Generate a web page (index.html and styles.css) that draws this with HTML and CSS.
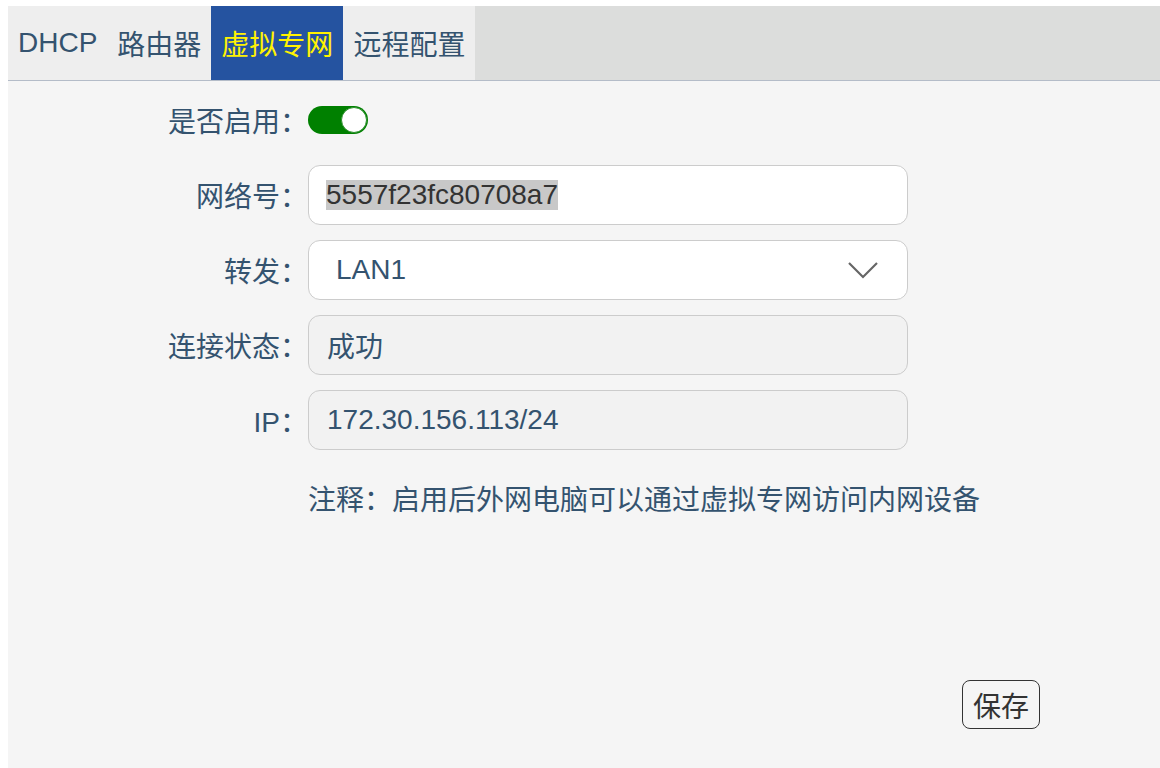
FILE: index.html
```html
<!DOCTYPE html>
<html lang="zh-CN">
<head>
    <meta charset="UTF-8">
    <meta name="viewport" content="width=device-width, initial-scale=1.0">
    <title>虚拟专网</title>
    <link rel="stylesheet" href="styles.css">
</head>
<body>
    <div class="tabs">
        <div class="tab">DHCP</div>
        <div class="tab">路由器</div>
        <div class="tab active">虚拟专网</div>
        <div class="tab">远程配置</div>
    </div>
    <div class="panel">
        <div class="form">
            <div class="row">
                <label class="label">是否启用：</label>
                <div class="switch on"><span class="knob"></span></div>
            </div>
            <div class="row">
                <label class="label">网络号：</label>
                <div class="field"><span class="selected">5557f23fc80708a7</span></div>
            </div>
            <div class="row">
                <label class="label">转发：</label>
                <div class="field select">
                    <span>LAN1</span>
                    <svg class="chevron" width="32" height="18" viewBox="0 0 32 18">
                        <polyline points="2,2 16,16 30,2" fill="none" stroke="#666" stroke-width="2.2"/>
                    </svg>
                </div>
            </div>
            <div class="row">
                <label class="label">连接状态：</label>
                <div class="field readonly">成功</div>
            </div>
            <div class="row">
                <label class="label">IP：</label>
                <div class="field readonly">172.30.156.113/24</div>
            </div>
            <p class="note">注释：启用后外网电脑可以通过虚拟专网访问内网设备</p>
        </div>
        <div class="actions">
            <button class="save">保存</button>
        </div>
    </div>
</body>
</html>
```

FILE: styles.css
```css
body {
    margin: 6px 0 0 8px;
    background-color: #ffffff;
    font-family: "Liberation Sans", "Noto Sans CJK SC", sans-serif;
    font-size: 28px;
    color: #34536f;
}
.tabs {
    display: flex;
    height: 74px;
    background-color: #dcdddc;
    border-bottom: 1px solid #b4bcc8;
}
.tab {
    display: flex;
    align-items: center;
    padding: 0 10px;
    background-color: #eeeeee;
    color: #34536f;
}
.tab.active {
    background-color: #2553a0;
    color: #fff200;
}
.panel {
    background-color: #f5f5f5;
    min-height: calc(100vh - 81px);
    padding-top: 9px;
}
.form {
    display: flex;
    flex-direction: column;
    gap: 15px;
}
.row {
    display: flex;
    align-items: center;
    height: 60px;
}
.label {
    width: 300px;
    text-align: right;
}
.switch {
    display: flex;
    align-items: center;
    justify-content: flex-end;
    box-sizing: border-box;
    width: 60px;
    height: 28px;
    padding: 1px;
    border-radius: 14px;
    background-color: #008000;
}
.knob {
    box-sizing: border-box;
    width: 26px;
    height: 26px;
    border-radius: 50%;
    border: 1px solid #2b8f2b;
    background-color: #ffffff;
}
.field {
    display: flex;
    align-items: center;
    box-sizing: border-box;
    width: 600px;
    height: 60px;
    padding: 0 17px;
    border: 1px solid #cccccc;
    border-radius: 12px;
    background-color: #ffffff;
}
.field.readonly {
    padding-left: 18px;
    background-color: #f2f2f2;
}
.field.select {
    justify-content: space-between;
    padding: 0 28px 0 27px;
}
.selected {
    background-color: #c8c8c8;
    color: #333333;
    line-height: 30px;
}
.note {
    margin: 14px 0 0 300px;
    line-height: 44px;
}
.actions {
    width: 1032px;
    display: flex;
    justify-content: flex-end;
    margin-top: 157px;
}
.save {
    height: 49px;
    padding: 0 10px;
    border: 1px solid #333333;
    border-radius: 8px;
    background-color: #f5f5f5;
    color: #333333;
    font-family: "Liberation Sans", "Noto Sans CJK SC", sans-serif;
    font-size: 28px;
}
```
